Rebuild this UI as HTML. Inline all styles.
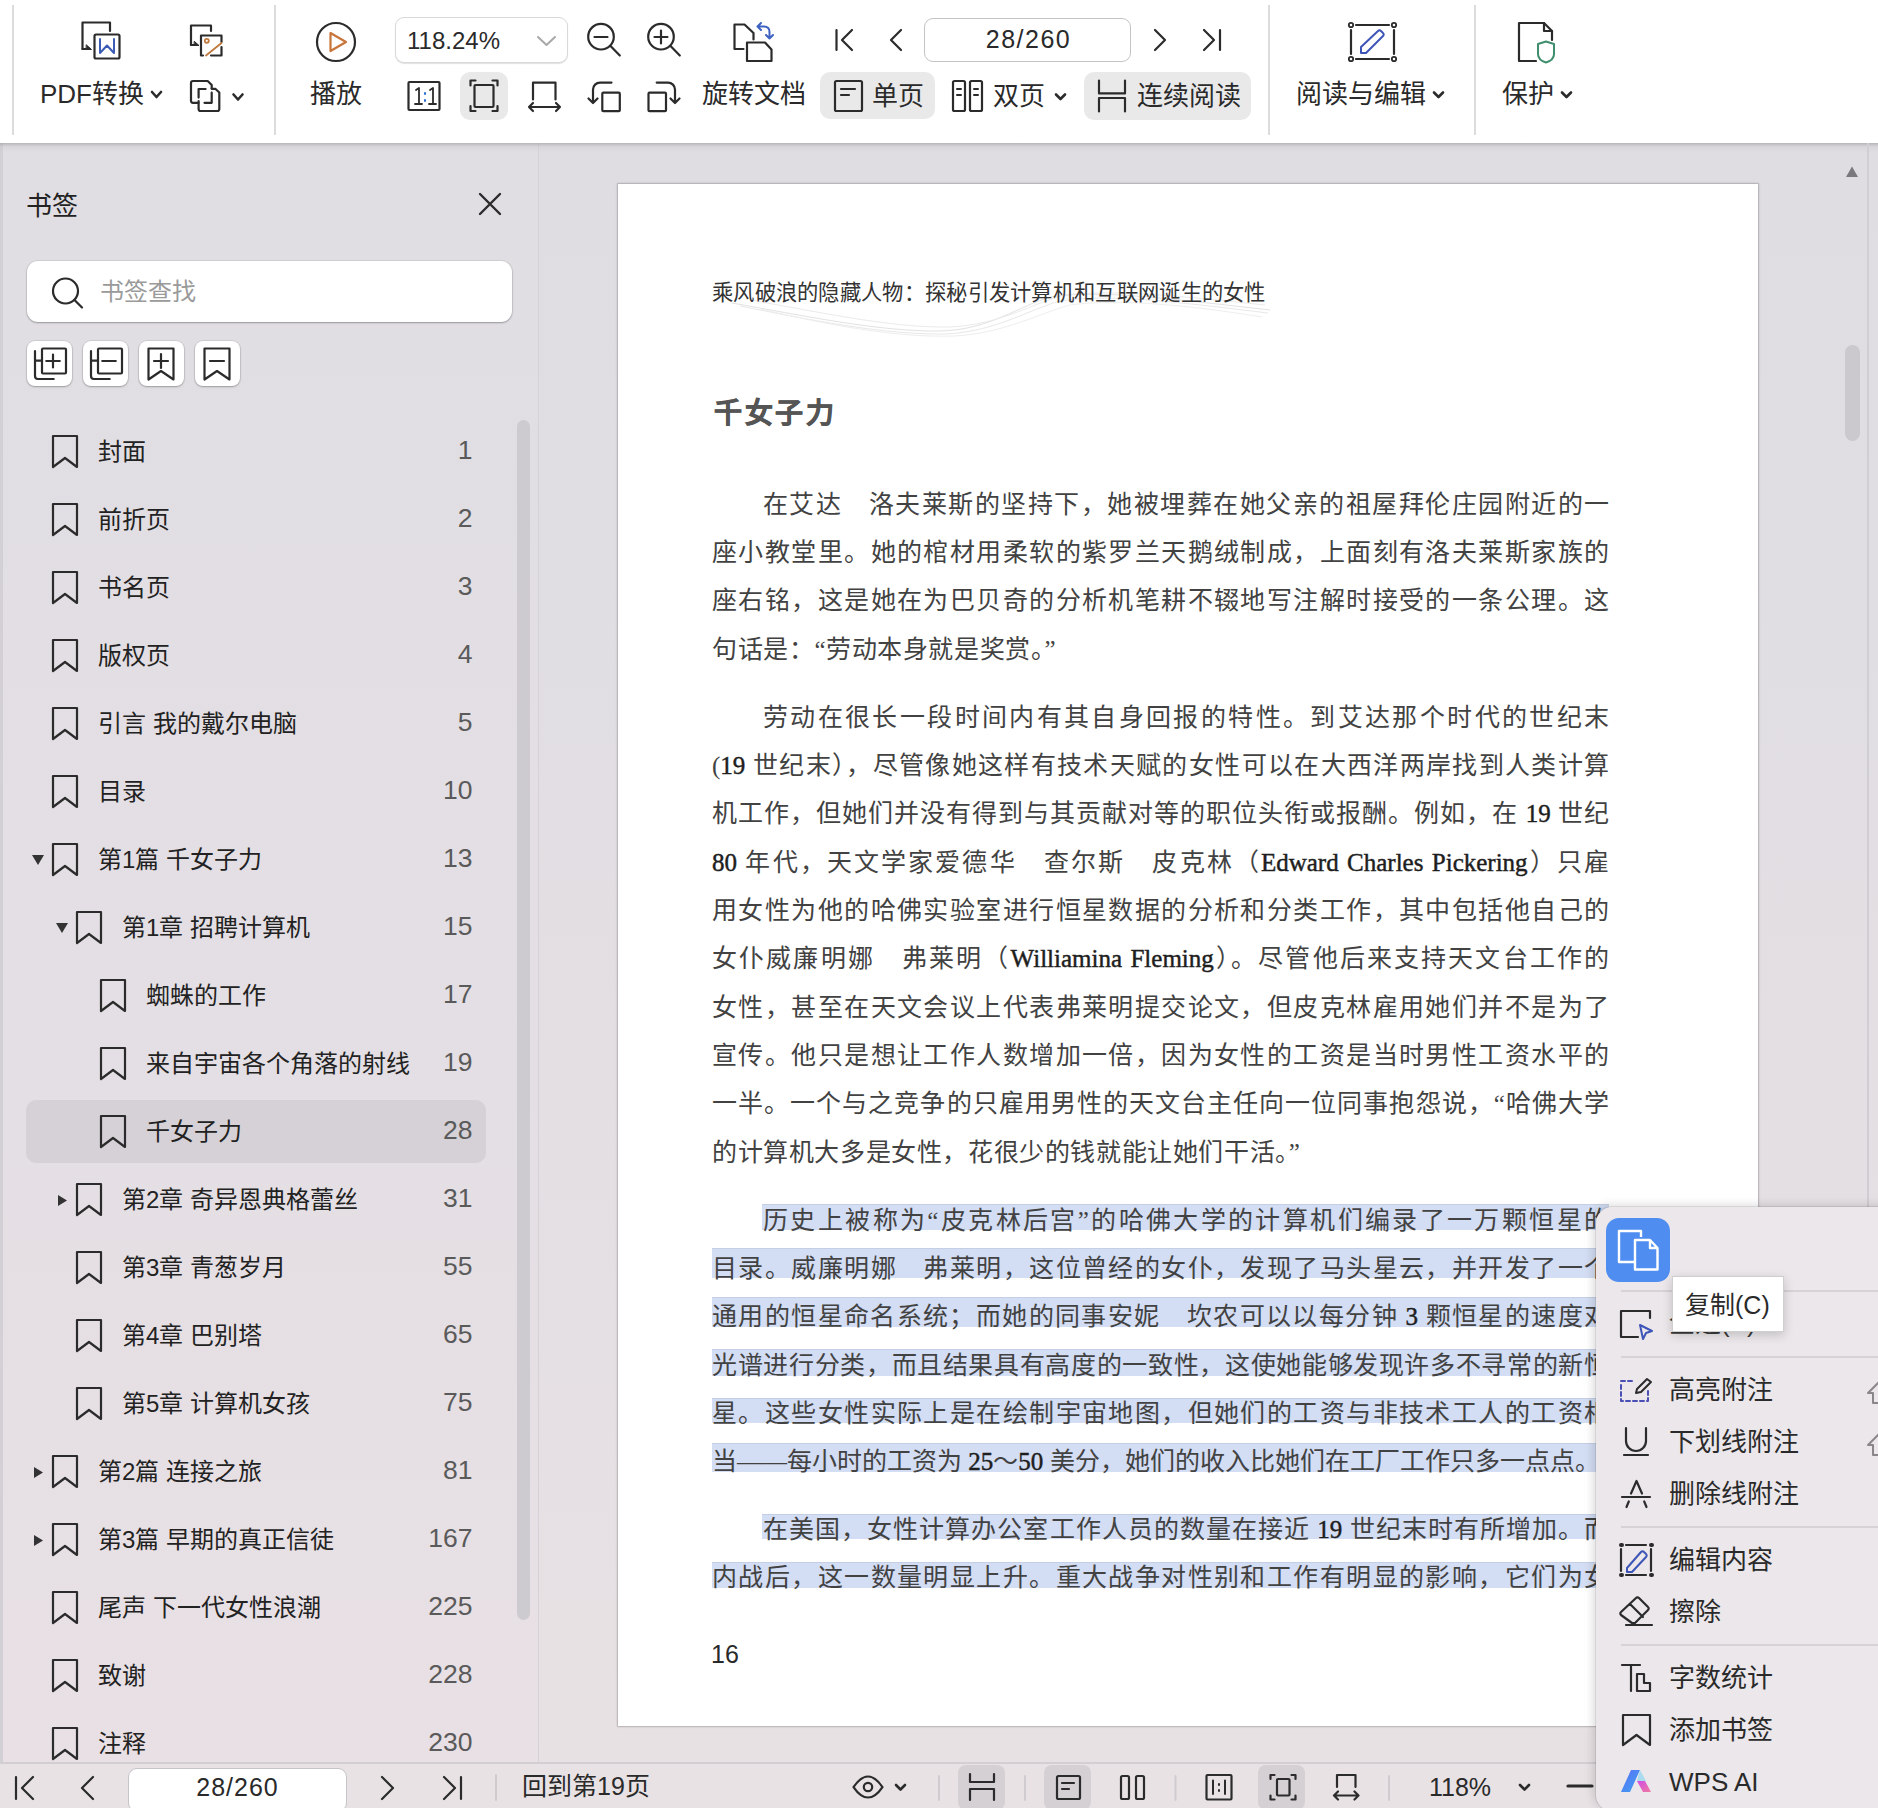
<!DOCTYPE html>
<html lang="zh-CN"><head><meta charset="utf-8">
<style>
*{box-sizing:border-box;margin:0;padding:0}
html,body{width:1878px;height:1808px;overflow:hidden;background:#dfdde2;font-family:"Liberation Sans",sans-serif;color:#222}
.a{position:absolute}
svg{position:absolute;overflow:visible}
.ic{fill:none;stroke:#2b2b2b;stroke-width:2.2;stroke-linecap:round;stroke-linejoin:round}
#tb{left:0;top:0;width:1878px;height:144px;background:#fff}
.sep{position:absolute;width:2px;background:#dcdcdc;top:5px;height:130px}
.lbl{position:absolute;font-size:26px;line-height:30px;color:#2a2a2a;white-space:nowrap}
.hl{position:absolute;background:#e9e9ea;border-radius:10px}
#side{left:0;top:143px;width:539px;height:1620px;background:linear-gradient(180deg,#e0dee3 0%,#e4dfe4 60%,#e8e0e4 100%)}
#main{left:539px;top:143px;width:1339px;height:1620px;background:linear-gradient(180deg,#dfdde2 0%,#e3dfe3 60%,#e8e1e4 100%)}
#page{left:618px;top:184px;width:1140px;height:1542px;background:#fff;box-shadow:0 0 1px 1px rgba(0,0,0,.12),0 0 3px rgba(0,0,0,.15)}
#status{left:0;top:1762px;width:1878px;height:46px;background:#e8e2e5;border-top:2px solid #d2ced2}
.row{position:absolute;left:0;width:539px;height:68px}
.rt{position:absolute;font-size:24px;line-height:28px;color:#222;white-space:nowrap}
.rn{position:absolute;font-size:26.5px;line-height:28px;color:#5a5a5a;left:372px;width:100.5px;text-align:right}
.ln{position:absolute;left:712px;width:896px;font-family:"Liberation Serif",serif;font-size:25px;line-height:30px;color:#424242;white-space:nowrap;text-align:justify;text-align-last:justify}
.sel{position:absolute;background:#d3ddf3;border-top:1px solid #c4cee4}
.ln b{font-weight:normal;color:#1e1e1e;-webkit-text-stroke:.45px #1e1e1e}
.nj{text-align:left;text-align-last:left;letter-spacing:.6px}
#menu{left:1596px;top:1207px;width:320px;height:604px;background:#ebe7ea;border-radius:16px;box-shadow:0 0 0 1px rgba(0,0,0,.08),-3px -2px 10px rgba(0,0,0,.14)}
.mt{position:absolute;left:1669px;font-size:26px;line-height:30px;color:#2a2a2a;white-space:nowrap}
.msep{position:absolute;left:1621px;width:257px;height:2px;background:#d6d2d5}
</style></head><body>

<!-- TOOLBAR -->
<div id="tb" class="a"></div>

<div class="sep" style="left:12px"></div>
<div class="sep" style="left:274px"></div>
<div class="sep" style="left:1268px"></div>
<div class="sep" style="left:1474px"></div>

<!-- PDF convert -->
<svg style="left:0;top:0" width="300" height="140" class="ic">
  <path d="M82.5 49 V22.5 H110 V31"/>
  <path d="M82.5 49 H87"/>
  <path d="M86.5 45 L91.5 49.5 H86.5 Z" fill="#2b2b2b" stroke-width="1"/>
  <rect x="94.5" y="34.5" width="25" height="24" rx="1.5"/>
  <path d="M100 39 V53 L107 45.5 L114 53 V39" stroke="#3c5bb4" stroke-width="2"/>
  <path d="M191 45 V25.5 H211 V31"/>
  <path d="M191 45 H195"/>
  <path d="M194.5 41.5 L199 45.5 H194.5 Z" fill="#2b2b2b" stroke-width="1"/>
  <path d="M203 55.5 H201 V35.5 H221.5 V42 M221.5 47 V55.5 H211"/>
  <circle cx="206.8" cy="40.8" r="2" stroke="#c07a3e" stroke-width="1.8"/>
  <path d="M206 55.5 L221.5 43" stroke="#c07a3e" stroke-width="1.8"/>
  <path d="M198.5 102.8 H193 a2 2 0 0 1 -2 -2 V83 a2 2 0 0 1 2 -2 H207.7 L211.7 85 V88.5"/>
  <path d="M211.7 92.5 V102.8 H204.5"/>
  <path d="M205.6 89 H198.6 V97.6"/>
  <path d="M198.6 101 V109 a2 2 0 0 0 2 2 H217.3 a2 2 0 0 0 2 -2 V92.5 L215.3 88.8 H211.7"/>
  <path d="M152 92 l4.5 5 4.5 -5" stroke-width="2.6"/>
  <path d="M233.5 94.5 l4.5 5 4.5 -5" stroke-width="2.6"/>
</svg>
<div class="lbl" style="left:40px;top:79px">PDF转换</div>

<!-- Play -->
<svg style="left:0;top:0" width="400" height="140" class="ic">
  <circle cx="336" cy="42" r="19"/>
  <path d="M330.5 33 L346 42 L330.5 51 Z" stroke="#c8753a" stroke-width="2.2"/>
</svg>
<div class="lbl" style="left:310px;top:79px">播放</div>

<!-- Zoom combo -->
<div class="a" style="left:395px;top:17px;width:173px;height:46px;border:1px solid #d9d9d9;border-radius:9px;background:#fff;box-shadow:0 1px 1px rgba(0,0,0,.12)"></div>
<div class="a" style="left:407px;top:26px;font-size:24px;line-height:30px;color:#2a2a2a">118.24%</div>
<svg style="left:0;top:0" width="1300" height="140" class="ic">
  <path d="M538 37 l8.5 8 8.5 -8" stroke="#a8a8a8" stroke-width="2"/>
  <!-- zoom out -->
  <circle cx="601" cy="36.7" r="12.8"/>
  <path d="M594.5 37 H607.5 M610.3 45.8 L619.8 55.5"/>
  <!-- zoom in -->
  <circle cx="661" cy="36.7" r="12.8"/>
  <path d="M654.5 37 H667.5 M661 30.5 V43.5 M670.3 45.8 L679.8 55.5"/>
  <!-- rotate doc -->
  <path d="M743.5 49 H734.5 V24.5 H744.5 L753.5 33 V39.5"/>
  <path d="M747 61 V42.5 H765 L771.5 49.5 V61 Z"/>
  <path d="M757.5 26.5 l3.5 -3.5 M757.5 26.5 l3.5 3.5 M758 26.5 H764 Q769.5 26.5 769.5 32 V38.5 M766 35 l3.5 3.5 3.5 -3.5" stroke="#3e62c2" stroke-width="2"/>
  <!-- row2 icons -->
  <rect x="408.5" y="82" width="31" height="28" rx="1"/>
  <path d="M416 90 l3 -2 V104 M430 90 l3 -2 V104 M415 104 H422 M429 104 H436" stroke-width="1.8"/>
  <path d="M425 93 v1 M425 100 v1" stroke="#2b6fd0" stroke-width="2"/>
</svg>
<div class="hl" style="left:460px;top:72px;width:48px;height:48px"></div>
<svg style="left:0;top:0" width="1300" height="140" class="ic">
  <path d="M470.5 85.5 V80.5 H475.5 M492.5 80.5 H497.5 V85.5 M497.5 106 V111 H492.5 M475.5 111 H470.5 V106"/>
  <rect x="474.5" y="85" width="19" height="22" rx="1"/>
  <!-- fit width -->
  <path d="M533 99.5 V82.7 H555.5 V99.5"/>
  <path d="M529 107 H560 M533 103 l-4 4 4 4 M556 103 l4 4 -4 4"/>
  <!-- rotate left -->
  <rect x="602.3" y="92.7" width="17.5" height="18.5" rx="1"/>
  <path d="M611.5 82.6 H600 a7 7 0 0 0 -7 7 V102.5 M588.5 98.5 L593 103 L597.5 98.5"/>
  <!-- rotate right -->
  <rect x="648.5" y="92.7" width="17.5" height="18.5" rx="1"/>
  <path d="M656.7 82.6 H668 a7 7 0 0 1 7 7 V102.5 M670.5 98.5 L675 103 L679.5 98.5"/>
  <!-- nav -->
  <path d="M836.5 30 V50 M852 30 L842 40 L852 50"/>
  <path d="M901 30 L891 40 L901 50"/>
  <path d="M1155 30 L1165 40 L1155 50"/>
  <path d="M1220 30 V50 M1204 30 L1214 40 L1204 50"/>
</svg>
<div class="lbl" style="left:702px;top:79px">旋转文档</div>

<!-- page input -->
<div class="a" style="left:924px;top:18px;width:207px;height:44px;border:1.5px solid #c4c4c4;border-radius:9px;background:#fff"></div>
<div class="a" style="left:925px;top:24px;width:207px;text-align:center;font-size:25px;line-height:30px;color:#2a2a2a;letter-spacing:1.5px">28/260</div>

<!-- single/double/continuous -->
<div class="hl" style="left:820px;top:72px;width:115px;height:47px"></div>
<div class="hl" style="left:1084px;top:72px;width:167px;height:48px"></div>
<svg style="left:0;top:0" width="1300" height="140" class="ic">
  <rect x="835" y="81" width="27" height="30" rx="1.5"/>
  <path d="M841 89 H855 M841 95 H849"/>
  <rect x="953" y="81" width="12" height="30" rx="1.5"/>
  <rect x="970" y="81" width="12" height="30" rx="1.5"/>
  <path d="M957 89 H961 M957 95 H961 M974 89 H978 M974 95 H978" stroke-width="2"/>
  <path d="M1056 94.5 l4.5 4.5 4.5 -4.5" stroke-width="2.6"/>
  <path d="M1099 80.5 V93.4 H1125 V80.5 M1099 111.5 V98 H1125 V111.5"/>
</svg>
<div class="lbl" style="left:872px;top:80.5px">单页</div>
<div class="lbl" style="left:993px;top:80.5px">双页</div>
<div class="lbl" style="left:1137px;top:80.5px">连续阅读</div>

<!-- read & edit -->
<svg style="left:0;top:0" width="1600" height="140" class="ic">
  <path d="M1356 25 H1389 M1356 59 H1389 M1351 30 V54 M1394 30 V54"/>
  <circle cx="1351" cy="25" r="2.2" stroke-width="1.8"/>
  <circle cx="1394" cy="25" r="2.2" stroke-width="1.8"/>
  <circle cx="1351" cy="59" r="2.2" stroke-width="1.8"/>
  <circle cx="1394" cy="59" r="2.2" stroke-width="1.8"/>
  <path d="M1361 47 L1378 31 a2 2 0 0 1 3 0 L1383 33 a2 2 0 0 1 0 3 L1366 53 H1361 Z" stroke="#3e55b8" stroke-width="2"/>
  <path d="M1434 92.5 l4.5 4.5 4.5 -4.5" stroke-width="2.6"/>
  <!-- protect -->
  <path d="M1536 61 H1519 V23 H1544 l8 8 V40"/>
  <path d="M1544 23 V31 H1552"/>
  <path d="M1538 44 l8 -2.5 8 2.5 V54 q0 6 -8 8.5 q-8 -2.5 -8 -8.5 Z" stroke="#3f8f6e" stroke-width="2"/>
  <path d="M1562 92.5 l4.5 4.5 4.5 -4.5" stroke-width="2.6"/>
</svg>
<div class="lbl" style="left:1296px;top:79px">阅读与编辑</div>
<div class="lbl" style="left:1502px;top:79px">保护</div>

<!-- SIDEBAR -->
<div id="side" class="a"></div>
<div class="a" style="left:538px;top:143px;width:1px;height:1620px;background:#d5d2d7"></div>
<div class="a" style="left:0;top:143px;width:3px;height:1620px;background:#d2d0d4"></div>
<div class="a" style="left:26px;top:190.5px;font-size:26px;line-height:30px;color:#222">书签</div>
<svg style="left:0;top:0" width="540" height="400" class="ic">
  <path d="M480 194 L500 214 M500 194 L480 214" stroke-width="2.4"/>
</svg>
<div class="a" style="left:27px;top:261px;width:485px;height:61px;background:#fff;border-radius:11px;box-shadow:0 0 0 1px rgba(0,0,0,.06),0 1px 2px rgba(0,0,0,.28)"></div>
<svg style="left:0;top:0" width="540" height="400" class="ic">
  <circle cx="65.5" cy="291" r="12.5"/>
  <path d="M74.5 300 L82 307.5"/>
</svg>
<div class="a" style="left:100px;top:278px;font-size:24px;line-height:28px;color:#9a9a9a">书签查找</div>
<div class="a" style="left:27px;top:341px;width:45px;height:45px;background:#fff;border-radius:8px;box-shadow:0 0 0 1px rgba(0,0,0,.07),0 1px 2px rgba(0,0,0,.25)"></div>
<div class="a" style="left:83px;top:341px;width:45px;height:45px;background:#fff;border-radius:8px;box-shadow:0 0 0 1px rgba(0,0,0,.07),0 1px 2px rgba(0,0,0,.25)"></div>
<div class="a" style="left:139px;top:341px;width:45px;height:45px;background:#fff;border-radius:8px;box-shadow:0 0 0 1px rgba(0,0,0,.07),0 1px 2px rgba(0,0,0,.25)"></div>
<div class="a" style="left:195px;top:341px;width:45px;height:45px;background:#fff;border-radius:8px;box-shadow:0 0 0 1px rgba(0,0,0,.07),0 1px 2px rgba(0,0,0,.25)"></div>
<svg style="left:0;top:0" width="540" height="400" class="ic" stroke-width="1.9">
  <rect x="42" y="348.5" width="24" height="25" rx="1"/>
  <path d="M35 351 V376 a3 3 0 0 0 3 3 H53.7 M35 360.6 H42 M46.3 361 H59.8 M53 354.5 V367.4"/>
  <rect x="98" y="348.5" width="24" height="25" rx="1"/>
  <path d="M91 351 V376 a3 3 0 0 0 3 3 H109.7 M91 360.6 H98 M102.3 361 H115.8"/>
  <path d="M148.5 348.5 H173.5 V379.5 L161 371 L148.5 379.5 Z M154 361 H168 M161 354 V368"/>
  <path d="M204.5 348.5 H229.5 V379.5 L217 371 L204.5 379.5 Z M210 361 H224"/>
</svg>
<div class="a" style="left:517px;top:420px;width:13px;height:1200px;background:#cecbd0;border-radius:7px"></div>
<div class="rt" style="left:98px;top:437.5px">封面</div>
<div class="rn" style="top:436px">1</div>
<div class="rt" style="left:98px;top:505.5px">前折页</div>
<div class="rn" style="top:504px">2</div>
<div class="rt" style="left:98px;top:573.5px">书名页</div>
<div class="rn" style="top:572px">3</div>
<div class="rt" style="left:98px;top:641.5px">版权页</div>
<div class="rn" style="top:640px">4</div>
<div class="rt" style="left:98px;top:709.5px">引言 我的戴尔电脑</div>
<div class="rn" style="top:708px">5</div>
<div class="rt" style="left:98px;top:777.5px">目录</div>
<div class="rn" style="top:776px">10</div>
<div class="rt" style="left:98px;top:845.5px">第1篇 千女子力</div>
<div class="rn" style="top:844px">13</div>
<div class="rt" style="left:122px;top:913.5px">第1章 招聘计算机</div>
<div class="rn" style="top:912px">15</div>
<div class="rt" style="left:146px;top:981.5px">蜘蛛的工作</div>
<div class="rn" style="top:980px">17</div>
<div class="rt" style="left:146px;top:1049.5px">来自宇宙各个角落的射线</div>
<div class="rn" style="top:1048px">19</div>
<div class="a" style="left:26px;top:1100px;width:460px;height:63px;background:#d5d1d6;border-radius:10px"></div>
<div class="rt" style="left:146px;top:1117.5px">千女子力</div>
<div class="rn" style="top:1116px">28</div>
<div class="rt" style="left:122px;top:1185.5px">第2章 奇异恩典格蕾丝</div>
<div class="rn" style="top:1184px">31</div>
<div class="rt" style="left:122px;top:1253.5px">第3章 青葱岁月</div>
<div class="rn" style="top:1252px">55</div>
<div class="rt" style="left:122px;top:1321.5px">第4章 巴别塔</div>
<div class="rn" style="top:1320px">65</div>
<div class="rt" style="left:122px;top:1389.5px">第5章 计算机女孩</div>
<div class="rn" style="top:1388px">75</div>
<div class="rt" style="left:98px;top:1457.5px">第2篇 连接之旅</div>
<div class="rn" style="top:1456px">81</div>
<div class="rt" style="left:98px;top:1525.5px">第3篇 早期的真正信徒</div>
<div class="rn" style="top:1524px">167</div>
<div class="rt" style="left:98px;top:1593.5px">尾声 下一代女性浪潮</div>
<div class="rn" style="top:1592px">225</div>
<div class="rt" style="left:98px;top:1661.5px">致谢</div>
<div class="rn" style="top:1660px">228</div>
<div class="rt" style="left:98px;top:1729.5px">注释</div>
<div class="rn" style="top:1728px">230</div>
<svg style="left:0;top:0" width="540" height="1808" class="ic" ><path d="M53 436 H77 V467 L65 458 L53 467 Z"/><path d="M53 504 H77 V535 L65 526 L53 535 Z"/><path d="M53 572 H77 V603 L65 594 L53 603 Z"/><path d="M53 640 H77 V671 L65 662 L53 671 Z"/><path d="M53 708 H77 V739 L65 730 L53 739 Z"/><path d="M53 776 H77 V807 L65 798 L53 807 Z"/><path d="M53 844 H77 V875 L65 866 L53 875 Z"/><path d="M32 855 H44 L38 865 Z" fill="#333" stroke="none"/><path d="M77 912 H101 V943 L89 934 L77 943 Z"/><path d="M56 923 H68 L62 933 Z" fill="#333" stroke="none"/><path d="M101 980 H125 V1011 L113 1002 L101 1011 Z"/><path d="M101 1048 H125 V1079 L113 1070 L101 1079 Z"/><path d="M101 1116 H125 V1147 L113 1138 L101 1147 Z"/><path d="M77 1184 H101 V1215 L89 1206 L77 1215 Z"/><path d="M58 1195 V1206 L67 1200.5 Z" fill="#333" stroke="none"/><path d="M77 1252 H101 V1283 L89 1274 L77 1283 Z"/><path d="M77 1320 H101 V1351 L89 1342 L77 1351 Z"/><path d="M77 1388 H101 V1419 L89 1410 L77 1419 Z"/><path d="M53 1456 H77 V1487 L65 1478 L53 1487 Z"/><path d="M34 1467 V1478 L43 1472.5 Z" fill="#333" stroke="none"/><path d="M53 1524 H77 V1555 L65 1546 L53 1555 Z"/><path d="M34 1535 V1546 L43 1540.5 Z" fill="#333" stroke="none"/><path d="M53 1592 H77 V1623 L65 1614 L53 1623 Z"/><path d="M53 1660 H77 V1691 L65 1682 L53 1691 Z"/><path d="M53 1728 H77 V1759 L65 1750 L53 1759 Z"/></svg>


<!-- MAIN -->
<div id="main" class="a"></div>
<div class="a" style="left:0;top:143px;width:1878px;height:9px;background:linear-gradient(rgba(150,148,152,.55),rgba(200,198,202,.35) 40%,rgba(220,218,222,0))"></div>
<div id="page" class="a"></div>
<svg style="left:0;top:0" width="1300" height="400" fill="none" stroke="#e2e2e2" stroke-width="1">
  <path d="M732 303 C800 315 880 332 940 331 C990 330 1020 305 1051 297 C1100 289 1180 300 1270 310"/>
  <path d="M740 306 C810 320 885 335 945 334 C995 332 1030 309 1060 301 C1110 293 1185 303 1268 313" stroke="#e8e8e8"/>
  <path d="M750 300 C820 312 890 328 950 327 C1000 325 1035 302 1065 295 C1115 289 1190 297 1265 305" stroke="#ebebeb"/>
  <path d="M760 309 C830 325 895 338 955 336 C1005 333 1040 313 1070 305 C1120 298 1195 306 1262 317" stroke="#eeeeee"/>
</svg>
<div class="a" style="left:712px;top:280px;font-size:21.3px;line-height:26px;color:#333;white-space:nowrap;letter-spacing:.3px">乘风破浪的隐藏人物：探秘引发计算机和互联网诞生的女性</div>
<div class="a" style="left:714px;top:397px;font-size:28px;line-height:34px;color:#555;font-weight:bold;letter-spacing:2.5px;white-space:nowrap;-webkit-text-stroke:.6px #555">千女子力</div>
<div class="sel" style="left:762px;top:1204.3px;width:847px;height:25.5px"></div>
<div class="sel" style="left:712px;top:1248.4px;width:897px;height:29.6px"></div>
<div class="sel" style="left:712px;top:1297px;width:897px;height:30.4px"></div>
<div class="sel" style="left:712px;top:1349.3px;width:897px;height:26.5px"></div>
<div class="sel" style="left:712px;top:1397.7px;width:897px;height:25.5px"></div>
<div class="sel" style="left:712px;top:1442.6px;width:885px;height:29.0px"></div>
<div class="sel" style="left:762px;top:1513.8px;width:847px;height:24.9px"></div>
<div class="sel" style="left:712px;top:1562px;width:897px;height:25.8px"></div>
<div class="ln" style="left:763px;top:489.6px;width:846px">在艾达　洛夫莱斯的坚持下，她被埋葬在她父亲的祖屋拜伦庄园附近的一</div>
<div class="ln" style="left:712px;top:538.0px;width:897px">座小教堂里。她的棺材用柔软的紫罗兰天鹅绒制成，上面刻有洛夫莱斯家族的</div>
<div class="ln" style="left:712px;top:586.3px;width:897px">座右铭，这是她在为巴贝奇的分析机笔耕不辍地写注解时接受的一条公理。这</div>
<div class="ln nj" style="left:712px;top:634.7px;width:897px">句话是：“劳动本身就是奖赏。”</div>
<div class="ln" style="left:763px;top:702.5px;width:846px">劳动在很长一段时间内有其自身回报的特性。到艾达那个时代的世纪末</div>
<div class="ln" style="left:712px;top:750.9px;width:897px">(<b>19</b> 世纪末），尽管像她这样有技术天赋的女性可以在大西洋两岸找到人类计算</div>
<div class="ln" style="left:712px;top:799.2px;width:897px">机工作，但她们并没有得到与其贡献对等的职位头衔或报酬。例如，在 <b>19</b> 世纪</div>
<div class="ln" style="left:712px;top:847.6px;width:897px"><b>80</b> 年代，天文学家爱德华　查尔斯　皮克林（<b>Edward Charles Pickering</b>）只雇</div>
<div class="ln" style="left:712px;top:895.9px;width:897px">用女性为他的哈佛实验室进行恒星数据的分析和分类工作，其中包括他自己的</div>
<div class="ln" style="left:712px;top:944.3px;width:897px">女仆威廉明娜　弗莱明（<b>Williamina Fleming</b>）。尽管他后来支持天文台工作的</div>
<div class="ln" style="left:712px;top:992.6px;width:897px">女性，甚至在天文会议上代表弗莱明提交论文，但皮克林雇用她们并不是为了</div>
<div class="ln" style="left:712px;top:1041.0px;width:897px">宣传。他只是想让工作人数增加一倍，因为女性的工资是当时男性工资水平的</div>
<div class="ln" style="left:712px;top:1089.3px;width:897px">一半。一个与之竞争的只雇用男性的天文台主任向一位同事抱怨说，“哈佛大学</div>
<div class="ln nj" style="left:712px;top:1137.7px;width:897px">的计算机大多是女性，花很少的钱就能让她们干活。”</div>
<div class="ln" style="left:763px;top:1205.5px;width:846px">历史上被称为“皮克林后宫”的哈佛大学的计算机们编录了一万颗恒星的</div>
<div class="ln" style="left:712px;top:1253.8px;width:897px">目录。威廉明娜　弗莱明，这位曾经的女仆，发现了马头星云，并开发了一个</div>
<div class="ln" style="left:712px;top:1302.2px;width:897px">通用的恒星命名系统；而她的同事安妮　坎农可以以每分钟 <b>3</b> 颗恒星的速度对</div>
<div class="ln" style="left:712px;top:1350.5px;width:897px">光谱进行分类，而且结果具有高度的一致性，这使她能够发现许多不寻常的新恒</div>
<div class="ln" style="left:712px;top:1398.9px;width:897px">星。这些女性实际上是在绘制宇宙地图，但她们的工资与非技术工人的工资相</div>
<div class="ln" style="left:712px;top:1447.2px;width:885px">当——每小时的工资为 <b>25</b>～<b>50</b> 美分，她们的收入比她们在工厂工作只多一点点。</div>
<div class="ln" style="left:763px;top:1515.1px;width:846px">在美国，女性计算办公室工作人员的数量在接近 <b>19</b> 世纪末时有所增加。而</div>
<div class="ln" style="left:712px;top:1563.4px;width:897px">内战后，这一数量明显上升。重大战争对性别和工作有明显的影响，它们为女</div>

<div class="a" style="left:711px;top:1639px;font-size:25px;line-height:30px;color:#2a2a2a">16</div>


<!-- right scroll -->
<div class="a" style="left:1867px;top:143px;width:2px;height:1620px;background:#d0ced3"></div>
<svg style="left:0;top:0" width="1878" height="500"><path d="M1846 177 L1852 166.5 L1858 177 Z" fill="#7a787c"/></svg>
<div class="a" style="left:1845px;top:345px;width:15px;height:96px;background:#cbc9ce;border-radius:8px"></div>

<!-- STATUS -->
<div id="status" class="a"></div>
<div class="a" style="left:128px;top:1768px;width:219px;height:44px;background:#fff;border:1.5px solid #c6c4c8;border-radius:9px"></div>
<div class="a" style="left:128px;top:1772px;width:219px;text-align:center;font-size:25px;line-height:30px;color:#2a2a2a;letter-spacing:1px">28/260</div>
<div class="a" style="left:522px;top:1771px;font-size:25px;line-height:30px;color:#2a2a2a">回到第19页</div>
<div class="a" style="left:1429px;top:1772px;font-size:25px;line-height:30px;color:#2a2a2a">118%</div>
<div class="a" style="left:958px;top:1765px;width:47px;height:45px;background:#d4d0d4;border-radius:8px"></div>
<div class="a" style="left:1044px;top:1765px;width:47px;height:45px;background:#d4d0d4;border-radius:8px"></div>
<div class="a" style="left:1258px;top:1765px;width:47px;height:45px;background:#d4d0d4;border-radius:8px"></div>
<svg style="left:0;top:0" width="1878" height="1808" class="ic">
  <path d="M16 1777 V1799 M33 1777 L22 1788 L33 1799"/>
  <path d="M93 1777 L82 1788 L93 1799"/>
  <path d="M382 1777 L393 1788 L382 1799"/>
  <path d="M461 1777 V1799 M444 1777 L455 1788 L444 1799"/>
  <path d="M496 1775 V1800 M939 1776 V1800 M1025 1776 V1800 M1175.5 1776 V1800 M1389 1776 V1800" stroke="#cfcbcf" stroke-width="2"/>
  <path d="M853.5 1787 Q868 1766 882.5 1787 Q868 1808 853.5 1787 Z"/>
  <circle cx="868" cy="1787" r="4.2"/>
  <path d="M896 1785 l4.5 4.5 4.5 -4.5" stroke-width="2.6"/>
  <path d="M970 1774 V1782 H994 V1774 M970 1800 V1789 H994 V1800"/>
  <rect x="1057" y="1776" width="23" height="23" rx="1.5"/>
  <path d="M1062 1783 H1074 M1062 1789 H1069"/>
  <rect x="1121" y="1776" width="8" height="23" rx="1.5"/>
  <rect x="1136" y="1776" width="8" height="23" rx="1.5"/>
  <rect x="1206.5" y="1775" width="25" height="24.5" rx="1"/>
  <path d="M1213 1780.5 V1794 M1225 1780.5 V1794 M1219 1784 v1 M1219 1790 v1" stroke-width="2"/>
  <path d="M1270.5 1779 V1775 H1274.5 M1291.5 1775 H1295.5 V1779 M1295.5 1795.5 V1799.5 H1291.5 M1274.5 1799.5 H1270.5 V1795.5"/>
  <rect x="1277" y="1779" width="12.5" height="16.5" rx="1"/>
  <path d="M1337 1787 V1775 H1355.5 V1787 M1334 1795.5 H1358.5 M1338 1791.5 l-4 4 4 4 M1354.5 1791.5 l4 4 -4 4"/>
  <path d="M1520 1785 l4.5 4.5 4.5 -4.5" stroke-width="2.6"/>
  <path d="M1568 1786 H1592" stroke-width="3.2"/>
</svg>

<!-- MENU -->
<div id="menu" class="a"></div>
<div class="a" style="left:1606px;top:1218px;width:64px;height:64px;background:#4f8ef0;border-radius:13px"></div>
<svg style="left:0;top:0" width="1878" height="1808" fill="none" stroke="#fff" stroke-width="2.4" stroke-linejoin="round">
  <path d="M1641 1237 V1231 H1619 V1262 H1634"/>
  <path d="M1635 1240 H1650 L1657.5 1248 V1269.5 H1635 Z M1650 1240 V1248 H1657.5"/>
</svg>
<div class="msep" style="top:1290px"></div>
<div class="msep" style="top:1356px"></div>
<div class="msep" style="top:1526px"></div>
<div class="msep" style="top:1644px"></div>
<div class="mt" style="top:1308px;color:#3a3a3a">全选(A)</div>
<div class="mt" style="top:1375px">高亮附注</div>
<div class="mt" style="top:1427px">下划线附注</div>
<div class="mt" style="top:1479px">删除线附注</div>
<div class="mt" style="top:1545px">编辑内容</div>
<div class="mt" style="top:1597px">擦除</div>
<div class="mt" style="top:1663px">字数统计</div>
<div class="mt" style="top:1715px">添加书签</div>
<div class="mt" style="top:1767px">WPS AI</div>
<svg style="left:0;top:0" width="1878" height="1808" class="ic">
  <path d="M1650 1318 V1311 H1621 V1337 H1638"/>
  <path d="M1640 1325 L1652 1331 L1646 1333 L1643 1339 Z" stroke="#3e55b8" stroke-width="2"/>
  <path d="M1621 1385 V1401 H1648 V1391 M1621 1381 H1634" stroke="#4a4fb5" stroke-dasharray="4 3" stroke-width="2"/>
  <path d="M1637 1389 L1647 1379 L1651 1382 L1641 1392 L1636 1393 Z" stroke-width="2"/>
  <path d="M1626 1428 V1441 a10 10 0 0 0 20 0 V1428 M1624 1455 H1648"/>
  <path d="M1622 1497 H1650 M1631 1493.5 L1636.5 1481 L1642 1493.5 M1626.5 1507 L1628.8 1501.5 M1646.5 1507 L1644.2 1501.5"/>
  <path d="M1626 1545 H1646 M1626 1575 H1646 M1621 1549 V1571 M1651 1549 V1571"/>
  <path d="M1621 1545 h1 M1651 1545 h1 M1621 1575 h1 M1651 1575 h1" stroke-width="4"/>
  <path d="M1627 1568 L1641 1552 a2 2 0 0 1 3 0 L1646 1554 a2 2 0 0 1 0 3 L1632 1572 H1627 Z" stroke="#3e55b8" stroke-width="2"/>
  <path d="M1621 1612 L1636 1598 a2 2 0 0 1 3 0 L1648 1607 a2 2 0 0 1 0 3 L1635 1623 H1632 L1621 1615 a2 2 0 0 1 0 -3 Z M1630 1604 L1643 1617 M1626 1625 H1652"/>
  <path d="M1622 1665 H1640 M1631 1665 V1691 M1637 1674 H1644 V1683 H1650 V1691 H1637 Z"/>
  <path d="M1623 1745 V1715 H1650 V1745 L1636.5 1735 Z"/>
</svg>
<svg style="left:0;top:0" width="1878" height="1808">
  <defs>
    <linearGradient id="wa" x1="0" y1="0" x2="1" y2="1"><stop offset="0" stop-color="#5b6ef5"/><stop offset="1" stop-color="#3fa4f2"/></linearGradient>
    <linearGradient id="wb" x1="0" y1="0" x2="1" y2="1"><stop offset="0" stop-color="#d14de6"/><stop offset="1" stop-color="#f07aa0"/></linearGradient>
  </defs>
  <path d="M1621 1792 L1631 1770 H1640 L1630 1792 Z" fill="url(#wa)"/>
  <path d="M1637 1781 H1645 L1651 1792 H1643 Z" fill="url(#wb)"/>
  <path d="M1640 1770 L1646 1781 H1637 Z" fill="#9ad8f0" opacity=".8"/>
</svg>
<svg style="left:0;top:0" width="1878" height="1808" fill="none" stroke="#8a878a" stroke-width="2" stroke-linejoin="round">
  <path d="M1880 1381 L1868 1393 H1873 V1403 H1880"/>
  <path d="M1880 1433 L1868 1445 H1873 V1455 H1880"/>
</svg>
<!-- tooltip -->
<div class="a" style="left:1672px;top:1276px;width:112px;height:56px;background:#fff;border:1px solid #cfcfcf;box-shadow:0 3px 10px rgba(0,0,0,.18)"></div>
<div class="a" style="left:1685px;top:1290px;font-size:25px;line-height:30px;color:#2a2a2a">复制(C)</div>

</body></html>
